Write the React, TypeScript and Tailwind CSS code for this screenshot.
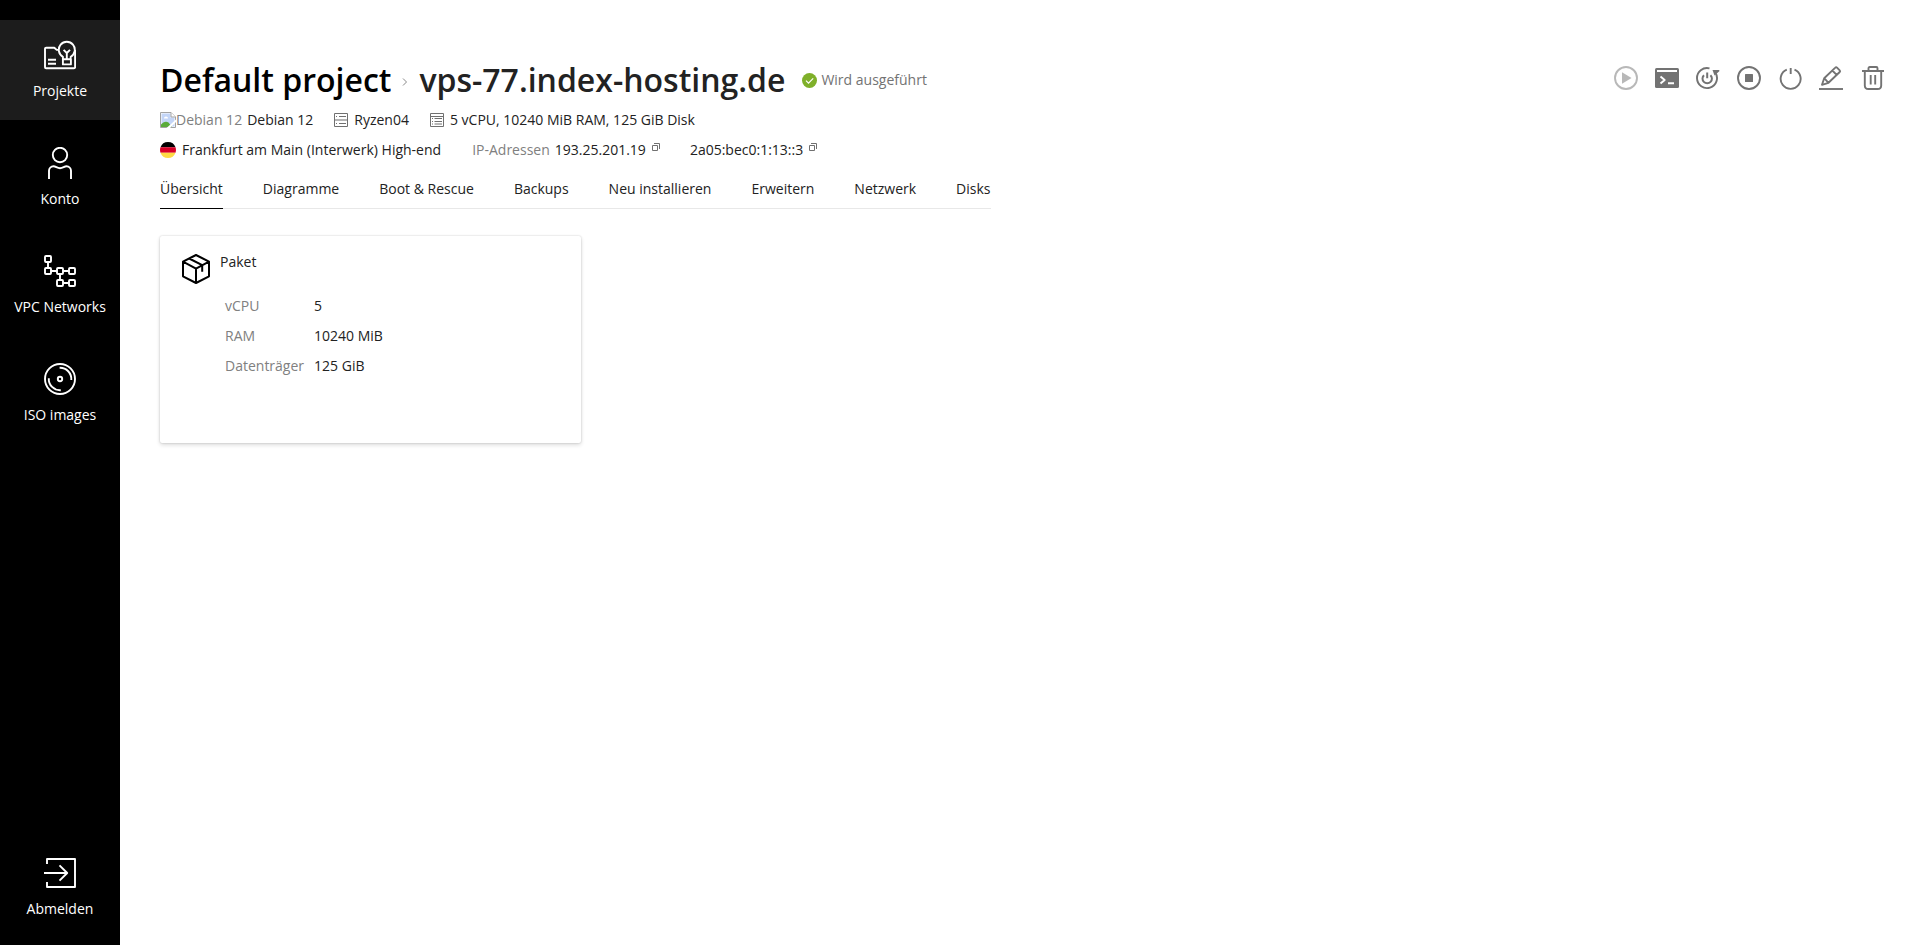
import React from "react";

type IconProps = { className?: string; children: React.ReactNode; box?: number };

function Line({ className = "size-8", children, box = 32 }: IconProps) {
  return (
    <svg
      className={className}
      viewBox={`0 0 ${box} ${box}`}
      fill="none"
      stroke="currentColor"
      strokeWidth="1.9"
      strokeLinejoin="round"
      aria-hidden="true"
    >
      {children}
    </svg>
  );
}

const ProjectsIcon = () => (
  <Line>
    <path d="M14.5 10.9h-1.8l-2.4-2.2H2.2c-.7 0-1.2.5-1.2 1.2v18.3c0 .6.5 1.1 1.1 1.1H30c.6 0 1.1-.5 1.1-1.1V11M4 20.8h8M4 24.8h8" />
    <path d="M18.9 20.2v-2.4a8 8 0 1 1 7.8 0v2.4M18.9 20.2h8v5.2h-8zM19.6 10.8l3.2 3.2 3.2-3.2M22.8 14v6" />
  </Line>
);

const AccountIcon = () => (
  <Line>
    <circle cx="16" cy="8" r="7.2" />
    <path d="M5 32v-8.2c0-2.6 2-4.5 4.5-4.5 2.3 0 3.6 1.9 6.5 1.9s4.2-1.9 6.5-1.9c2.5 0 4.5 1.9 4.5 4.5V32" />
  </Line>
);

const NetworkIcon = () => (
  <Line>
    <rect x="1" y="1" width="6" height="6" rx="1" />
    <rect x="1" y="13" width="6" height="6" rx="1" />
    <rect x="13" y="13" width="6" height="6" rx="1" />
    <rect x="25" y="13" width="6" height="6" rx="1" />
    <rect x="13" y="25" width="6" height="6" rx="1" />
    <rect x="25" y="25" width="6" height="6" rx="1" />
    <path d="M4 7v6M7 16h6M19 16h6M16 19v6M19 28h6" />
  </Line>
);

const DiscIcon = () => (
  <Line>
    <circle cx="16" cy="16" r="15" />
    <circle cx="16" cy="16" r="2.2" />
    <path d="M15.6 4.8A11.3 11.3 0 0 1 27.3 17M4.8 15.2A11.3 11.3 0 0 0 16.8 27.2" />
  </Line>
);

const LogoutIcon = () => (
  <Line>
    <path d="M3 7V2h28v28H3v-5M0 16h23.5M15.5 8.3l7.7 7.700-7.7 7.700" />
  </Line>
);

function NavItem({ label, icon, active }: { label: string; icon: React.ReactNode; active?: boolean }) {
  return (
    <a
      href="#"
      aria-current={active ? "page" : undefined}
      className={`flex h-[100px] flex-col items-center gap-[9px] pt-[19px] leading-[22px] text-white ${
        active ? "bg-[#1c1c1c]" : ""
      }`}
    >
      {icon}
      <span>{label}</span>
    </a>
  );
}

const MissingImageIcon = () => (
  <svg className="size-4" viewBox="0 0 16 16" aria-hidden="true">
    <path d="M.5.5H11L15.500 5v10.500H.5z" fill="#fff" stroke="#a3a3a3" />
    <path d="M1.500 1.500H10.500V5.500H14.500V14.500H1.500z" fill="#c3d5f7" />
    <path d="M4 6.500c0-1.200.8-2 2-2s2 .8 2 2z" fill="#fff" />
    <path d="M1 15v-2.500C3 10 6 8.800 8.500 10.500L12 15z" fill="#5aab3a" />
    <path d="M16 7.500v2.500L10 16H6.500z" fill="#fff" />
    <path d="M11 .5V5h4.500" fill="#fff" stroke="#a3a3a3" />
  </svg>
);

const NodeIcon = () => (
  <svg className="size-3.5" viewBox="0 0 14 14" fill="none" stroke="#707070" aria-hidden="true">
    <path d="M.5.5h13v13H.5z" />
    <path d="M1 7.500h12M1 6.500h12" stroke="#b5b5b5" />
    <path d="M2 3.500h1M5 3.500h7M2 10.500h1M5 10.500h7" />
  </svg>
);

const SpecsIcon = () => (
  <svg className="size-3.5" viewBox="0 0 14 14" fill="none" stroke="#707070" aria-hidden="true">
    <path d="M.5.5h13v13H.5zM1 3.500h12" />
    <path d="M2 5.500h1M4.500 5.500H12M2 8.500h1M4.500 8.500H12M2 11h1M4.500 11H12" />
  </svg>
);

const GermanyFlag = () => (
  <svg className="size-4" viewBox="0 0 16 16" aria-hidden="true">
    <path d="M.5 5.300a8 8 0 0 1 15 0z" fill="#000" />
    <path d="M.5 5.300h15a8 8 0 0 1 0 5.400H.5a8 8 0 0 1 0-5.400z" fill="#d80027" />
    <path d="M.5 10.700h15a8 8 0 0 1-15 0z" fill="#ffda44" />
  </svg>
);

function CopyButton({ label }: { label: string }) {
  return (
    <button type="button" aria-label={label} className="mb-1.5 text-[#707070]">
      <svg className="size-2" viewBox="0 0 8 8" fill="none" stroke="currentColor" aria-hidden="true">
        <path d="M.5 2.500h5v5h-5zM2 .5h5.500V6" />
      </svg>
    </button>
  );
}

const actions: { label: string; icon: React.ReactNode; disabled?: boolean }[] = [
  {
    label: "Starten",
    disabled: true,
    icon: (
      <Line className="size-6" box={24}>
        <circle cx="12" cy="12" r="11" />
        <path d="M8 6.300v11.400l9.500-5.700z" fill="currentColor" stroke="none" />
      </Line>
    ),
  },
  {
    label: "Konsole",
    icon: (
      <Line className="size-6" box={24}>
        <rect x="0" y="2" width="24" height="20" rx="1.5" fill="currentColor" stroke="none" />
        <path d="M2 5h20" stroke="#fff" strokeWidth="2" />
        <path d="M5.500 10.500l4.200 3.500-4.200 3.500M13 17.200h6" stroke="#fff" />
      </Line>
    ),
  },
  {
    label: "Neu starten",
    icon: (
      <Line className="size-6" box={24}>
        <path d="M13.500 2.400A10 10 0 1 0 19.300 6.500" />
        <path d="M16.500 4h6.800v1.200L18.500 9.500z" fill="currentColor" stroke="none" />
        <path d="M8 9.200a4.700 4.700 0 1 0 6.400 0M11.200 6.500v5.800" strokeWidth="2" />
      </Line>
    ),
  },
  {
    label: "Stoppen",
    icon: (
      <Line className="size-6" box={24}>
        <circle cx="12" cy="12" r="11" />
        <rect x="8" y="8" width="8" height="8" rx=".5" fill="currentColor" stroke="none" />
      </Line>
    ),
  },
  {
    label: "Ausschalten",
    icon: (
      <Line className="size-6" box={24}>
        <path d="M8.800 3.600a10 10 0 1 0 7.700 0M12.700 2v6" />
      </Line>
    ),
  },
  {
    label: "Bearbeiten",
    icon: (
      <Line className="size-6" box={24}>
        <path d="M0 23h24" />
        <path d="M3 18.800l2.200-6.600L16.300 1.600c.5-.5 1.200-.5 1.700 0l2.700 2.700c.5.5.5 1.200 0 1.700L9.500 16.800zM5.200 12.200l4.300 4.600M13.300 4.500l4.400 4.400" />
      </Line>
    ),
  },
  {
    label: "Löschen",
    icon: (
      <Line className="size-6" box={24}>
        <path d="M2 5h22M8.500 5V2.200c0-.7.5-1.200 1.200-1.200h6.600c.7 0 1.200.5 1.200 1.200V5M4.800 5v14.500c0 2 1.500 3.500 3.600 3.500h9.200c2.100 0 3.600-1.500 3.600-3.500V5M10.700 9v9.500M15.200 9v9.500" />
      </Line>
    ),
  },
];

const tabs = ["Übersicht", "Diagramme", "Boot & Rescue", "Backups", "Neu installieren", "Erweitern", "Netzwerk", "Disks"];

const specs = [
  ["vCPU", "5"],
  ["RAM", "10240 MiB"],
  ["Datenträger", "125 GiB"],
];

export default function App() {
  return (
    <div className="flex min-h-screen bg-white font-['Open_Sans',sans-serif] text-sm text-[#222222]">
      <nav className="flex w-[120px] shrink-0 flex-col justify-between bg-black pt-5 pb-[7px]">
        <div className="flex flex-col gap-2">
          <NavItem label="Projekte" icon={<ProjectsIcon />} active />
          <NavItem label="Konto" icon={<AccountIcon />} />
          <NavItem label="VPC Networks" icon={<NetworkIcon />} />
          <NavItem label="ISO images" icon={<DiscIcon />} />
        </div>
        <NavItem label="Abmelden" icon={<LogoutIcon />} />
      </nav>

      <main className="flex-1 pt-[60px] pr-9 pl-10">
        <header className="flex items-start justify-between">
          <div className="flex items-center">
            <h1 className="flex items-center text-[32px] leading-10 font-semibold">
              <a href="#" className="text-black">Default project</a>
              <svg className="mx-[11px] mt-1 h-2 w-1.5" viewBox="0 0 6 8" fill="none" stroke="#888" aria-hidden="true">
                <path d="M1 .5L4.500 4 1 7.500" />
              </svg>
              <span>vps-77.index-hosting.de</span>
            </h1>
            <div className="ml-[17px] flex items-center gap-1 text-[#737373]">
              <svg className="size-[15px]" viewBox="0 0 15 15" fill="none" aria-hidden="true">
                <circle cx="7.5" cy="7.5" r="7.5" fill="#7fb02a" />
                <path d="M4 7.600l2.500 2.500 4.700-4.700" stroke="#fff" strokeWidth="1.2" />
              </svg>
              Wird ausgeführt
            </div>
          </div>
          <div className="flex gap-[17px] pt-1.5 text-[#737373]">
            {actions.map((a) => (
              <button key={a.label} type="button" aria-label={a.label} disabled={a.disabled} className="disabled:opacity-50">
                {a.icon}
              </button>
            ))}
          </div>
        </header>

        <div className="mt-[5px] flex h-[30px] items-center">
          <MissingImageIcon />
          <span className="text-[#808080]">Debian 12</span>
          <span className="ml-[5px]">Debian 12</span>
          <span className="ml-[21px] flex items-center gap-1.5">
            <NodeIcon />
            Ryzen04
          </span>
          <span className="ml-[21px] flex items-center gap-1.5">
            <SpecsIcon />5 vCPU, 10240 MiB RAM, 125 GiB Disk
          </span>
        </div>
        <div className="flex h-[30px] items-center">
          <GermanyFlag />
          <span className="ml-1.5">Frankfurt am Main (Interwerk) High-end</span>
          <span className="ml-[31px] text-[#808080]">IP-Adressen</span>
          <span className="ml-[5px] flex items-center gap-1.5">
            193.25.201.19
            <CopyButton label="IPv4 kopieren" />
          </span>
          <span className="ml-[30px] flex items-center gap-1.5">
            2a05:bec0:1:13::3
            <CopyButton label="IPv6 kopieren" />
          </span>
        </div>

        <nav className="mt-[7px] flex w-max gap-10 border-b border-[#e8e8e8]">
          {tabs.map((t, i) => (
            <a
              key={t}
              href="#"
              className={`-mb-px border-b pt-1.5 pb-2 leading-[22px] ${i === 0 ? "border-black" : "border-transparent"}`}
            >
              {t}
            </a>
          ))}
        </nav>

        <section className="mt-[27px] flex min-h-[207px] w-[421px] gap-2 rounded-xs bg-white pt-[15px] pl-5 shadow-[0_2px_4px_rgba(0,0,0,0.14),0_0_2px_rgba(0,0,0,0.2)]">
          <svg className="mt-0.5 size-8" viewBox="0 0 32 32" fill="none" stroke="#000" strokeWidth="2" strokeLinejoin="round" aria-hidden="true">
            <path d="M16 2L29 8.700v14.600L16 30 3 23.300V8.700zM3 8.700l13 6.900 13-6.900M16 15.600V30M9.200 5.500l13 6.700v6.500" />
          </svg>
          <div>
            <h2 className="leading-[22px]">Paket</h2>
            <table className="mt-[18px] ml-[5px]">
              <tbody>
                {specs.map(([k, v]) => (
                  <tr key={k} className="h-[30px]">
                    <th scope="row" className="pr-2.5 text-left font-normal text-[#808080]">{k}</th>
                    <td>{v}</td>
                  </tr>
                ))}
              </tbody>
            </table>
          </div>
        </section>
      </main>
    </div>
  );
}
